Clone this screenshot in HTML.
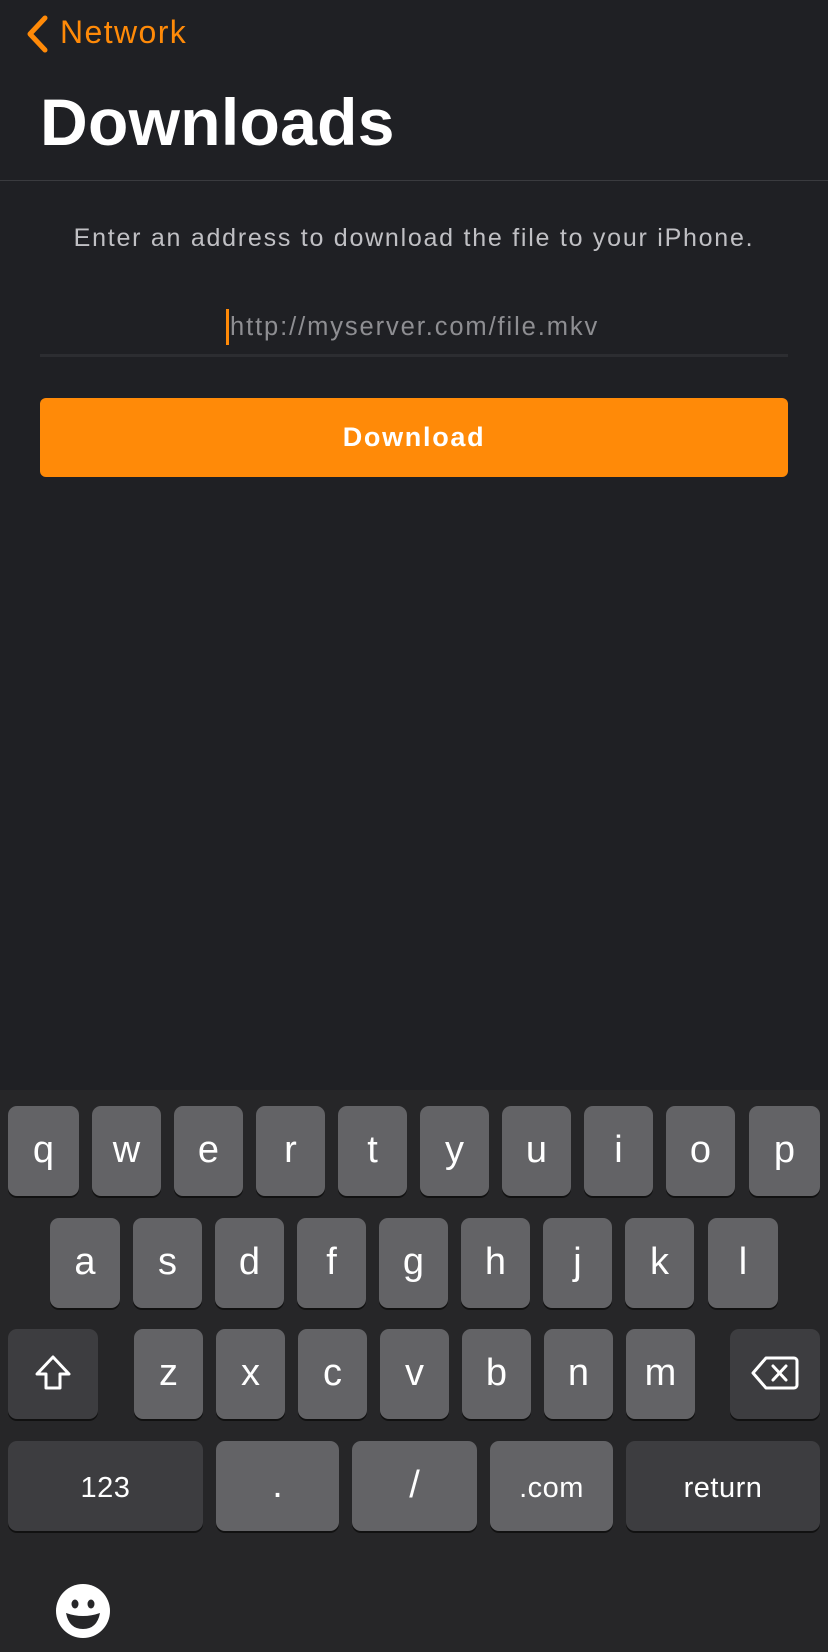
<!DOCTYPE html>
<html><head><meta charset="utf-8"><style>
*{margin:0;padding:0;box-sizing:border-box}
body{width:828px;height:1652px;background:#1f2024;font-family:"Liberation Sans",sans-serif;position:relative;overflow:hidden;color:#fff}
.a{position:absolute}
.k{position:absolute;background:#636366;border-radius:9px;box-shadow:0 2px 0 #111;display:flex;align-items:center;justify-content:center;font-size:38px;color:#fff;height:90px;padding-bottom:2px}
.d{background:#3d3d40}
.s{font-size:29px;padding-bottom:0;padding-top:4px;letter-spacing:0.5px}
</style></head><body>
<svg class="a" style="left:24px;top:14px" width="26" height="40" viewBox="0 0 26 40"><path d="M21 4 L6 20 L21 36" stroke="#ff8a08" stroke-width="5" fill="none" stroke-linecap="round" stroke-linejoin="round"/></svg>
<div class="a" style="left:60px;top:14px;font-size:32px;color:#ff8a08;letter-spacing:1.4px">Network</div>
<div class="a" style="left:40px;top:84px;font-size:66px;font-weight:bold;letter-spacing:0.3px">Downloads</div>
<div class="a" style="left:0;top:180px;width:828px;height:1px;background:#3a3b3f"></div>
<div class="a" style="left:0;top:224px;width:828px;text-align:center;font-size:25px;color:#c0c0c4;letter-spacing:1.75px">Enter an address to download the file to your iPhone.</div>
<div class="a" style="left:226px;top:309px;width:3px;height:36px;background:#ff8a08"></div>
<div class="a" style="left:230px;top:313px;font-size:25.5px;color:#8e8e92;letter-spacing:1.9px">http://myserver.com/file.mkv</div>
<div class="a" style="left:40px;top:354px;width:748px;height:3px;background:#2c2d31"></div>
<div class="a" style="left:40px;top:398px;width:748px;height:79px;background:#ff8a08;border-radius:6px;display:flex;align-items:center;justify-content:center;font-size:27px;font-weight:bold;letter-spacing:1.7px">Download</div>
<div class="a" style="left:0;top:1090px;width:828px;height:562px;background:#262628"></div>
<div class="k" style="left:8px;top:1106px;width:71px">q</div>
<div class="k" style="left:92px;top:1106px;width:69px">w</div>
<div class="k" style="left:174px;top:1106px;width:69px">e</div>
<div class="k" style="left:256px;top:1106px;width:69px">r</div>
<div class="k" style="left:338px;top:1106px;width:69px">t</div>
<div class="k" style="left:420px;top:1106px;width:69px">y</div>
<div class="k" style="left:502px;top:1106px;width:69px">u</div>
<div class="k" style="left:584px;top:1106px;width:69px">i</div>
<div class="k" style="left:666px;top:1106px;width:69px">o</div>
<div class="k" style="left:749px;top:1106px;width:71px">p</div>
<div class="k" style="left:50px;top:1218px;width:70px">a</div>
<div class="k" style="left:133px;top:1218px;width:69px">s</div>
<div class="k" style="left:215px;top:1218px;width:69px">d</div>
<div class="k" style="left:297px;top:1218px;width:69px">f</div>
<div class="k" style="left:379px;top:1218px;width:69px">g</div>
<div class="k" style="left:461px;top:1218px;width:69px">h</div>
<div class="k" style="left:543px;top:1218px;width:69px">j</div>
<div class="k" style="left:625px;top:1218px;width:69px">k</div>
<div class="k" style="left:708px;top:1218px;width:70px">l</div>
<div class="k d" style="left:8px;top:1329px;width:90px"><svg width="40" height="40" viewBox="0 0 40 40"><path d="M20 4 L36 21 H27 V35 H13 V21 H4 Z" fill="none" stroke="#fff" stroke-width="3" stroke-linejoin="round"/></svg></div>
<div class="k" style="left:134px;top:1329px;width:69px">z</div>
<div class="k" style="left:216px;top:1329px;width:69px">x</div>
<div class="k" style="left:298px;top:1329px;width:69px">c</div>
<div class="k" style="left:380px;top:1329px;width:69px">v</div>
<div class="k" style="left:462px;top:1329px;width:69px">b</div>
<div class="k" style="left:544px;top:1329px;width:69px">n</div>
<div class="k" style="left:626px;top:1329px;width:69px">m</div>
<div class="k d" style="left:730px;top:1329px;width:90px"><svg width="50" height="36" viewBox="0 0 50 36"><path d="M16 3 H44 A3 3 0 0 1 47 6 V30 A3 3 0 0 1 44 33 H16 L3 18 Z" fill="none" stroke="#fff" stroke-width="3" stroke-linejoin="round"/><path d="M23 11 L36 25 M36 11 L23 25" stroke="#fff" stroke-width="3" stroke-linecap="round"/></svg></div>
<div class="k d s" style="left:8px;top:1441px;width:195px">123</div>
<div class="k" style="left:216px;top:1441px;width:123px">.</div>
<div class="k" style="left:352px;top:1441px;width:125px">/</div>
<div class="k s" style="left:490px;top:1441px;width:123px">.com</div>
<div class="k d s" style="left:626px;top:1441px;width:194px">return</div>
<svg class="a" style="left:55px;top:1583px" width="56" height="56" viewBox="0 0 56 56"><ellipse cx="28" cy="28" rx="27" ry="27" fill="#fff"/><ellipse cx="20" cy="21" rx="3.5" ry="4.5" fill="#262628"/><ellipse cx="36" cy="21" rx="3.5" ry="4.5" fill="#262628"/><path d="M11 30 Q28 36 45 30 Q42 46 28 46 Q14 46 11 30 Z" fill="#262628"/></svg>
</body></html>
